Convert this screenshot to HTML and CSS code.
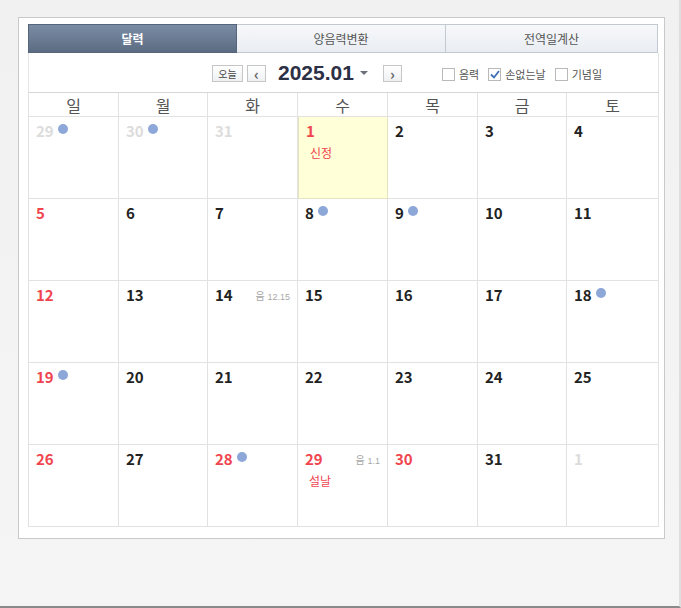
FILE: index.html
```html
<!DOCTYPE html>
<html lang="ko">
<head>
  <meta charset="UTF-8">
  <title>달력</title>
  <link rel="stylesheet" href="styles.css">
</head>
<body>

  <div class="frame">
    <div class="panel">

      <div class="tabs">
        <div class="tab active">달력</div>
        <div class="tab">양음력변환</div>
        <div class="tab">전역일계산</div>
      </div>

      <div class="toolbar">
        <button class="btn-today">오늘</button>
        <button class="btn-nav">&lsaquo;</button>
        <span class="month">2025.01</span>
        <span class="caret"></span>
        <button class="btn-nav">&rsaquo;</button>

        <div class="options">
          <label class="opt"><span class="box"></span>음력</label>
          <label class="opt"><span class="box checked">
            <svg width="10" height="9" viewBox="0 0 10 9"><path d="M1 4.5 L4 7.5 L9 1" fill="none" stroke="#3b6fb6" stroke-width="1.8"/></svg>
          </span>손없는날</label>
          <label class="opt"><span class="box"></span>기념일</label>
        </div>
      </div>

      <div class="calendar" id="calendar">
        <div class="dow">일</div>
        <div class="dow">월</div>
        <div class="dow">화</div>
        <div class="dow">수</div>
        <div class="dow">목</div>
        <div class="dow">금</div>
        <div class="dow">토</div>
      </div>

    </div>
  </div>

  <script>
    // 2024.12.29 ~ 2025.02.01
    const days = [
      { d: 29, other: true, dot: true },
      { d: 30, other: true, dot: true },
      { d: 31, other: true },
      { d: 1, red: true, today: true, note: '신정' },
      { d: 2 }, { d: 3 }, { d: 4 },
      { d: 5, red: true }, { d: 6 }, { d: 7 },
      { d: 8, dot: true }, { d: 9, dot: true }, { d: 10 }, { d: 11 },
      { d: 12, red: true }, { d: 13 }, { d: 14, lunar: '12.15' },
      { d: 15 }, { d: 16 }, { d: 17 }, { d: 18, dot: true },
      { d: 19, red: true, dot: true }, { d: 20 }, { d: 21 }, { d: 22 },
      { d: 23 }, { d: 24 }, { d: 25 },
      { d: 26, red: true }, { d: 27 }, { d: 28, red: true, dot: true },
      { d: 29, red: true, lunar: '1.1', note: '설날' },
      { d: 30, red: true }, { d: 31 }, { d: 1, other: true }
    ];

    const cal = document.getElementById('calendar');
    days.forEach(item => {
      const cell = document.createElement('div');
      cell.className = 'cell' + (item.today ? ' today' : '');
      let cls = 'num';
      if (item.other) cls += ' other';
      else if (item.red) cls += ' red';
      cell.innerHTML = `
        <div class="top">
          <span class="${cls}">${item.d}</span>
          ${item.dot ? '<span class="dot"></span>' : ''}
          ${item.lunar ? `<span class="lunar">음 <small>${item.lunar}</small></span>` : ''}
        </div>
        ${item.note ? `<div class="note">${item.note}</div>` : ''}
      `;
      cal.appendChild(cell);
    });
  </script>

</body>
</html>
```

FILE: styles.css
```css
* {
  box-sizing: border-box;
}

html, body {
  margin: 0;
  padding: 0;
}

body {
  width: 681px;
  height: 608px;
  font-family: "Noto Sans CJK KR", "Noto Sans", sans-serif;
  background: #f0f0f0;
  overflow: hidden;
}

.frame {
  width: 681px;
  height: 608px;
  padding: 17px 0 0 18px;
  background: linear-gradient(#f1f1f1, #f5f5f5);
  border-bottom: 2px solid #8a8a8a;
  border-right: 2px solid #dedede;
}

.panel {
  width: 647px;
  height: 522px;
  background: #fff;
  border: 1px solid #c9c9c9;
  padding: 6px 5px 0 9px;
}

/* tabs */
.tabs {
  display: flex;
  height: 29px;
}

.tab {
  width: 209px;
  display: flex;
  align-items: center;
  justify-content: center;
  font-size: 12px;
  color: #555;
  background: linear-gradient(#f7f8fa, #e9edf2);
  border: 1px solid #c3c9d1;
  border-left: none;
}

.tab:last-child {
  width: 212px;
}

.tab:first-child {
  border-left: 1px solid #c3c9d1;
}

.tab.active {
  color: #fff;
  font-weight: bold;
  background: linear-gradient(#7a8ca4, #5b6b82);
  border-color: #56657a;
}

/* toolbar */
.toolbar {
  height: 39px;
  display: flex;
  align-items: center;
  padding-left: 183px;
  border-left: 1px solid #e4e4e4;
  border-right: 1px solid #e4e4e4;
}

.toolbar button {
  height: 17px;
  padding: 0;
  border: 1px solid #c6c6c6;
  background: linear-gradient(#fff, #eef0f2);
  font-family: inherit;
  color: #444;
  cursor: pointer;
  line-height: 14px;
}

.btn-today {
  width: 31px;
  font-size: 10px;
  margin-top: 2px;
}

.btn-nav {
  width: 19px;
  font-size: 15px;
  font-weight: bold;
  margin-left: 4px;
  margin-top: 2px;
  color: #666 !important;
}

.month {
  margin-left: 12px;
  font-family: "Liberation Sans", Arial, sans-serif;
  font-size: 21px;
  font-weight: bold;
  color: #2c3044;
}

.caret {
  margin-left: 6px;
  margin-right: 11px;
  width: 0;
  height: 0;
  border-left: 4px solid transparent;
  border-right: 4px solid transparent;
  border-top: 4px solid #6b6f7a;
}

.options {
  display: flex;
  align-items: center;
  margin-left: 40px;
  margin-top: 3px;
  gap: 9px;
}

.opt {
  display: flex;
  align-items: center;
  font-size: 11px;
  color: #555;
}

.box {
  width: 13px;
  height: 13px;
  border: 1px solid #b9b9b9;
  background: #fff;
  margin-right: 4px;
  display: flex;
  align-items: center;
  justify-content: center;
}

/* calendar grid */
.calendar {
  display: grid;
  grid-template-columns: 90px 89px 90px 90px 90px 89px 92px;
  grid-template-rows: 24px repeat(5, 82px);
  border-top: 1px solid #d6d6d6;
  border-left: 1px solid #e2e2e2;
  width: 631px;
}

.dow {
  display: flex;
  align-items: center;
  justify-content: center;
  font-size: 16px;
  color: #555;
  border-right: 1px solid #e2e2e2;
  border-bottom: 1px solid #e2e2e2;
}

.cell {
  border-right: 1px solid #e2e2e2;
  border-bottom: 1px solid #e2e2e2;
  padding: 3px 7px 0 7px;
}

.cell.today {
  background: #ffffd8;
  border: 1px solid #e3e3c0;
  border-top: none;
}

.top {
  display: flex;
  align-items: flex-start;
  height: 21px;
}

.num {
  font-size: 15px;
  font-weight: bold;
  color: #222;
  line-height: 21px;
}

.num.red {
  color: #f0454f;
}

.num.other {
  color: #dcdcdc;
}

.dot {
  width: 10px;
  height: 10px;
  border-radius: 50%;
  background: #8ca7d8;
  margin-left: 4px;
  margin-top: 4px;
}

.lunar {
  margin-left: auto;
  font-size: 10px;
  color: #a8a8a8;
  line-height: 21px;
  margin-top: 1px;
}

.lunar small {
  font-family: "Liberation Sans", Arial, sans-serif;
  font-size: 9px;
}

.note {
  margin-top: 3px;
  padding-left: 4px;
  font-size: 12px;
  color: #f0454f;
}
```
